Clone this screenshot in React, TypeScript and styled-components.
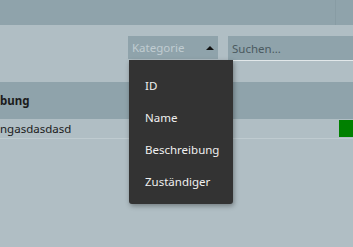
import React from 'react'
import styled, { createGlobalStyle } from 'styled-components'

const GlobalStyle = createGlobalStyle`
  html, body {
    margin: 0;
    padding: 0;
    background: #b0bec4;
    font-family: 'Segoe UI', 'Noto Sans', 'Open Sans', sans-serif;
    overflow: hidden;
  }
`

const Page = styled.div`
  width: 353px;
  height: 247px;
  background: #b0bec4;
  display: flex;
  flex-direction: column;
  overflow: hidden;
`

const TopBar = styled.div`
  height: 25px;
  background: #8fa3ab;
  display: flex;
  justify-content: flex-end;
  flex-shrink: 0;
`

const TopDivider = styled.div`
  width: 17px;
  border-left: 1px solid #889ca4;
`

const Toolbar = styled.div`
  display: flex;
  gap: 10px;
  padding: 11px 0 0 128px;
  height: 57px;
  box-sizing: border-box;
  flex-shrink: 0;
`

const ComboWrap = styled.div`
  position: relative;
`

const Combo = styled.div`
  width: 90px;
  height: 23px;
  background: #8fa3ab;
  display: flex;
  align-items: center;
  justify-content: space-between;
  padding: 0 2px 0 4px;
  box-sizing: border-box;
  color: #c0ccd1;
  font-size: 11.5px;
`

const Arrow = styled.span`
  width: 0;
  height: 0;
  border-left: 4px solid transparent;
  border-right: 4px solid transparent;
  border-bottom: 4px solid #111;
  margin-right: 2px;
`

const Search = styled.div`
  flex: 1;
  height: 24px;
  background: #8fa3ab;
  border-bottom: 1px solid #e2e8ea;
  display: flex;
  align-items: center;
  padding-left: 4px;
  color: #4b5a60;
  font-size: 11.5px;
`

const Menu = styled.ul`
  position: absolute;
  top: 24px;
  left: 1px;
  width: 104px;
  margin: 0;
  padding: 9px 0 7px;
  list-style: none;
  background: #333333;
  border-radius: 0 0 3px 3px;
  box-shadow: 1px 2px 5px rgba(0, 0, 0, 0.35);
  z-index: 5;
`

const MenuItem = styled.li`
  height: 32px;
  display: flex;
  align-items: center;
  padding-left: 16px;
  color: #f0f0f0;
  font-size: 11.5px;
`

const HeaderRow = styled.div`
  height: 37px;
  background: #8fa3ab;
  display: flex;
  align-items: center;
  font-weight: bold;
  font-size: 11.5px;
  color: #1b1b1b;
  flex-shrink: 0;
`

const DataRow = styled.div`
  height: 19px;
  display: flex;
  align-items: center;
  justify-content: space-between;
  font-size: 11.5px;
  color: #1b1b1b;
  border-bottom: 1px solid #bfcbd0;
  flex-shrink: 0;
`

const Status = styled.span<{ color: string }>`
  width: 14px;
  height: 17px;
  background: ${({ color }) => color};
`

export default function App() {
  return (
    <Page>
      <GlobalStyle />
      <TopBar>
        <TopDivider />
      </TopBar>
      <Toolbar>
        <ComboWrap>
          <Combo>
            Kategorie
            <Arrow />
          </Combo>
          <Menu>
            <MenuItem>ID</MenuItem>
            <MenuItem>Name</MenuItem>
            <MenuItem>Beschreibung</MenuItem>
            <MenuItem>Zuständiger</MenuItem>
          </Menu>
        </ComboWrap>
        <Search>Suchen...</Search>
      </Toolbar>
      <HeaderRow>bung</HeaderRow>
      <DataRow>
        ngasdasdasd
        <Status color="#008000" />
      </DataRow>
    </Page>
  )
}
